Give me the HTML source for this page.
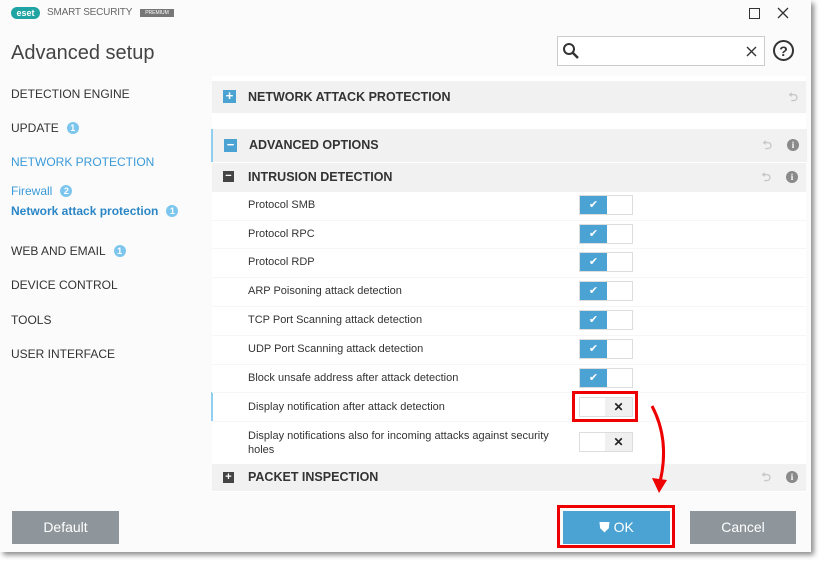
<!DOCTYPE html><html><head><style>
body{margin:0;width:825px;height:568px;background:#fff;font-family:"Liberation Sans",sans-serif;position:relative;overflow:hidden}
.a{position:absolute}
.win{left:0;top:0;width:811px;height:552px;background:#fbfbfb;box-shadow:3px 3px 5px rgba(0,0,0,.45)}
.nav{font-size:12px;color:#333;left:11px}
.badge{display:inline-block;width:12px;height:12px;border-radius:6px;background:#7cc6ee;color:#fff;font-size:9px;font-weight:bold;text-align:center;line-height:12px;vertical-align:1px;margin-left:8px}
.hdr{left:212px;width:594px;background:#f1f1f1;font-size:12.5px;font-weight:bold;color:#333}
.hdr span.t{position:absolute;left:36px}
.ic{position:absolute;left:11px;width:13px;height:13px;color:#fff;font-size:13px;line-height:12px;text-align:center;font-weight:bold}
.row{left:248px;font-size:11px;color:#333}
.tg{left:579px;width:54px;height:20px;background:#fff;border:1px solid #ddd;box-sizing:border-box}
.tg.on::before{content:"✔";position:absolute;left:0;top:0;width:27px;height:18px;background:#4ba3d4;color:#fff;font-size:11px;text-align:center;line-height:18px}
.tg.off::after{content:"✕";position:absolute;right:0;top:0;width:27px;height:18px;background:#f0f0f0;color:#222;font-size:12px;font-weight:bold;text-align:center;line-height:18px}
.sep{left:212px;width:594px;height:1px;background:#f6f6f6}
.ri{position:absolute;right:8px;width:12px;height:12px;border-radius:6px;background:#8a8a8a;color:#fff;font-size:9px;font-weight:bold;text-align:center;line-height:12px;font-family:"Liberation Serif",serif}
.un{position:absolute;right:35px;color:#c8c8c8;font-size:12px}
.btn{height:33px;color:#fff;font-size:14px;text-align:center;line-height:33px}
.red{border:3px solid #e00;box-sizing:border-box}
</style></head><body>
<div class="a win"></div>
<div class="a" style="left:11px;top:7px;width:29px;height:12px;background:#1fa3a3;border-radius:6px;color:#fff;font-size:9px;font-weight:bold;text-align:center;line-height:12px">eset</div>
<div class="a" style="left:47px;top:7px;font-size:10px;color:#666;letter-spacing:-0.2px">SMART SECURITY</div>
<div class="a" style="left:140px;top:9px;width:34px;height:8px;background:#777;color:#fff;font-size:5px;text-align:center;line-height:8px">PREMIUM</div>
<div class="a" style="left:749px;top:8px;width:9px;height:9px;border:1px solid #333"></div>
<svg class="a" style="left:777px;top:7px" width="12" height="12"><path d="M1 1L11 11M11 1L1 11" stroke="#333" stroke-width="1.3"/></svg>
<div class="a" style="left:11px;top:42px;font-size:20px;color:#444">Advanced setup</div>
<div class="a" style="left:557px;top:36px;width:208px;height:30px;border:1px solid #ccc;background:#fff;box-sizing:border-box"></div>
<svg class="a" style="left:562px;top:42px" width="18" height="18"><circle cx="7" cy="7" r="5" fill="none" stroke="#333" stroke-width="2"/><path d="M11 11l5 5" stroke="#333" stroke-width="2.5"/></svg>
<svg class="a" style="left:746px;top:46px" width="11" height="11"><path d="M1 1L10 10M10 1L1 10" stroke="#333" stroke-width="1.4"/></svg>
<div class="a" style="left:773px;top:40px;width:21px;height:21px;border:2px solid #333;border-radius:50%;box-sizing:border-box;text-align:center;font-size:14px;font-weight:bold;line-height:18px;color:#333">?</div>
<div class="a nav" style="top:87px">DETECTION ENGINE</div>
<div class="a nav" style="top:121px">UPDATE<span class="badge">1</span></div>
<div class="a nav" style="top:155px;color:#3a9ad9">NETWORK PROTECTION</div>
<div class="a nav" style="top:184px;color:#3a9ad9">Firewall<span class="badge">2</span></div>
<div class="a nav" style="top:204px;color:#2a86c6;font-weight:bold">Network attack protection<span class="badge">1</span></div>
<div class="a nav" style="top:244px">WEB AND EMAIL<span class="badge">1</span></div>
<div class="a nav" style="top:278px">DEVICE CONTROL</div>
<div class="a nav" style="top:313px">TOOLS</div>
<div class="a nav" style="top:347px">USER INTERFACE</div>
<div class="a" style="left:212px;top:76px;width:594px;height:416px;background:#fff"></div>
<div class="a hdr" style="top:81px;height:32px;line-height:32px"><div class="ic" style="top:9px;background:#4ba3d4">+</div><span class="t">NETWORK ATTACK PROTECTION</span><span class="un" style="right:8px">⮌</span></div>
<div class="a hdr" style="top:129px;height:33px;line-height:33px;border-left:2px solid #8fd0f0;left:211px"><div class="ic" style="top:10px;background:#4ba3d4">−</div><span class="t">ADVANCED OPTIONS</span><span class="un">⮌</span><div class="ri" style="top:10px">i</div></div>
<div class="a hdr" style="top:163px;height:29px;line-height:29px"><div class="ic" style="top:8px;background:#444;width:11px;height:11px;line-height:10px;font-size:11px">−</div><span class="t">INTRUSION DETECTION</span><span class="un">⮌</span><div class="ri" style="top:8px">i</div></div>
<div class="a row" style="top:199px">Protocol SMB</div><div class="a tg on" style="top:195px"></div>
<div class="a sep" style="top:220px"></div>
<div class="a row" style="top:228px">Protocol RPC</div><div class="a tg on" style="top:224px"></div>
<div class="a sep" style="top:248px"></div>
<div class="a row" style="top:256px">Protocol RDP</div><div class="a tg on" style="top:252px"></div>
<div class="a sep" style="top:277px"></div>
<div class="a row" style="top:285px">ARP Poisoning attack detection</div><div class="a tg on" style="top:281px"></div>
<div class="a sep" style="top:306px"></div>
<div class="a row" style="top:314px">TCP Port Scanning attack detection</div><div class="a tg on" style="top:310px"></div>
<div class="a sep" style="top:335px"></div>
<div class="a row" style="top:343px">UDP Port Scanning attack detection</div><div class="a tg on" style="top:339px"></div>
<div class="a sep" style="top:364px"></div>
<div class="a row" style="top:372px">Block unsafe address after attack detection</div><div class="a tg on" style="top:368px"></div>
<div class="a" style="left:211px;top:392px;width:2px;height:29px;background:#8fd0f0"></div>
<div class="a sep" style="top:392px"></div>
<div class="a row" style="top:401px">Display notification after attack detection</div><div class="a tg off" style="top:397px"></div>
<div class="a sep" style="top:421px"></div>
<div class="a row" style="top:429px;line-height:14px">Display notifications also for incoming attacks against security<br>holes</div><div class="a tg off" style="top:432px"></div>
<div class="a hdr" style="top:464px;height:27px;line-height:27px"><div class="ic" style="top:8px;background:#444;width:11px;height:11px;line-height:10px;font-size:11px">+</div><span class="t">PACKET INSPECTION</span><span class="un">⮌</span><div class="ri" style="top:7px">i</div></div>
<div class="a red" style="left:572px;top:391px;width:66px;height:31px"></div>
<div class="a btn" style="left:12px;top:511px;width:107px;background:#8e969b">Default</div>
<div class="a btn" style="left:563px;top:511px;width:107px;background:#4ba3d4">⛊ OK</div>
<div class="a red" style="left:557px;top:505px;width:118px;height:43px"></div>
<div class="a btn" style="left:690px;top:511px;width:106px;background:#8e969b">Cancel</div>
<svg class="a" style="left:640px;top:400px" width="40" height="100"><path d="M12 6 Q30 40 20 82" fill="none" stroke="#e00" stroke-width="3"/><path d="M12 78 L19 93 L27 80 Z" fill="#e00"/></svg>
</body></html>
